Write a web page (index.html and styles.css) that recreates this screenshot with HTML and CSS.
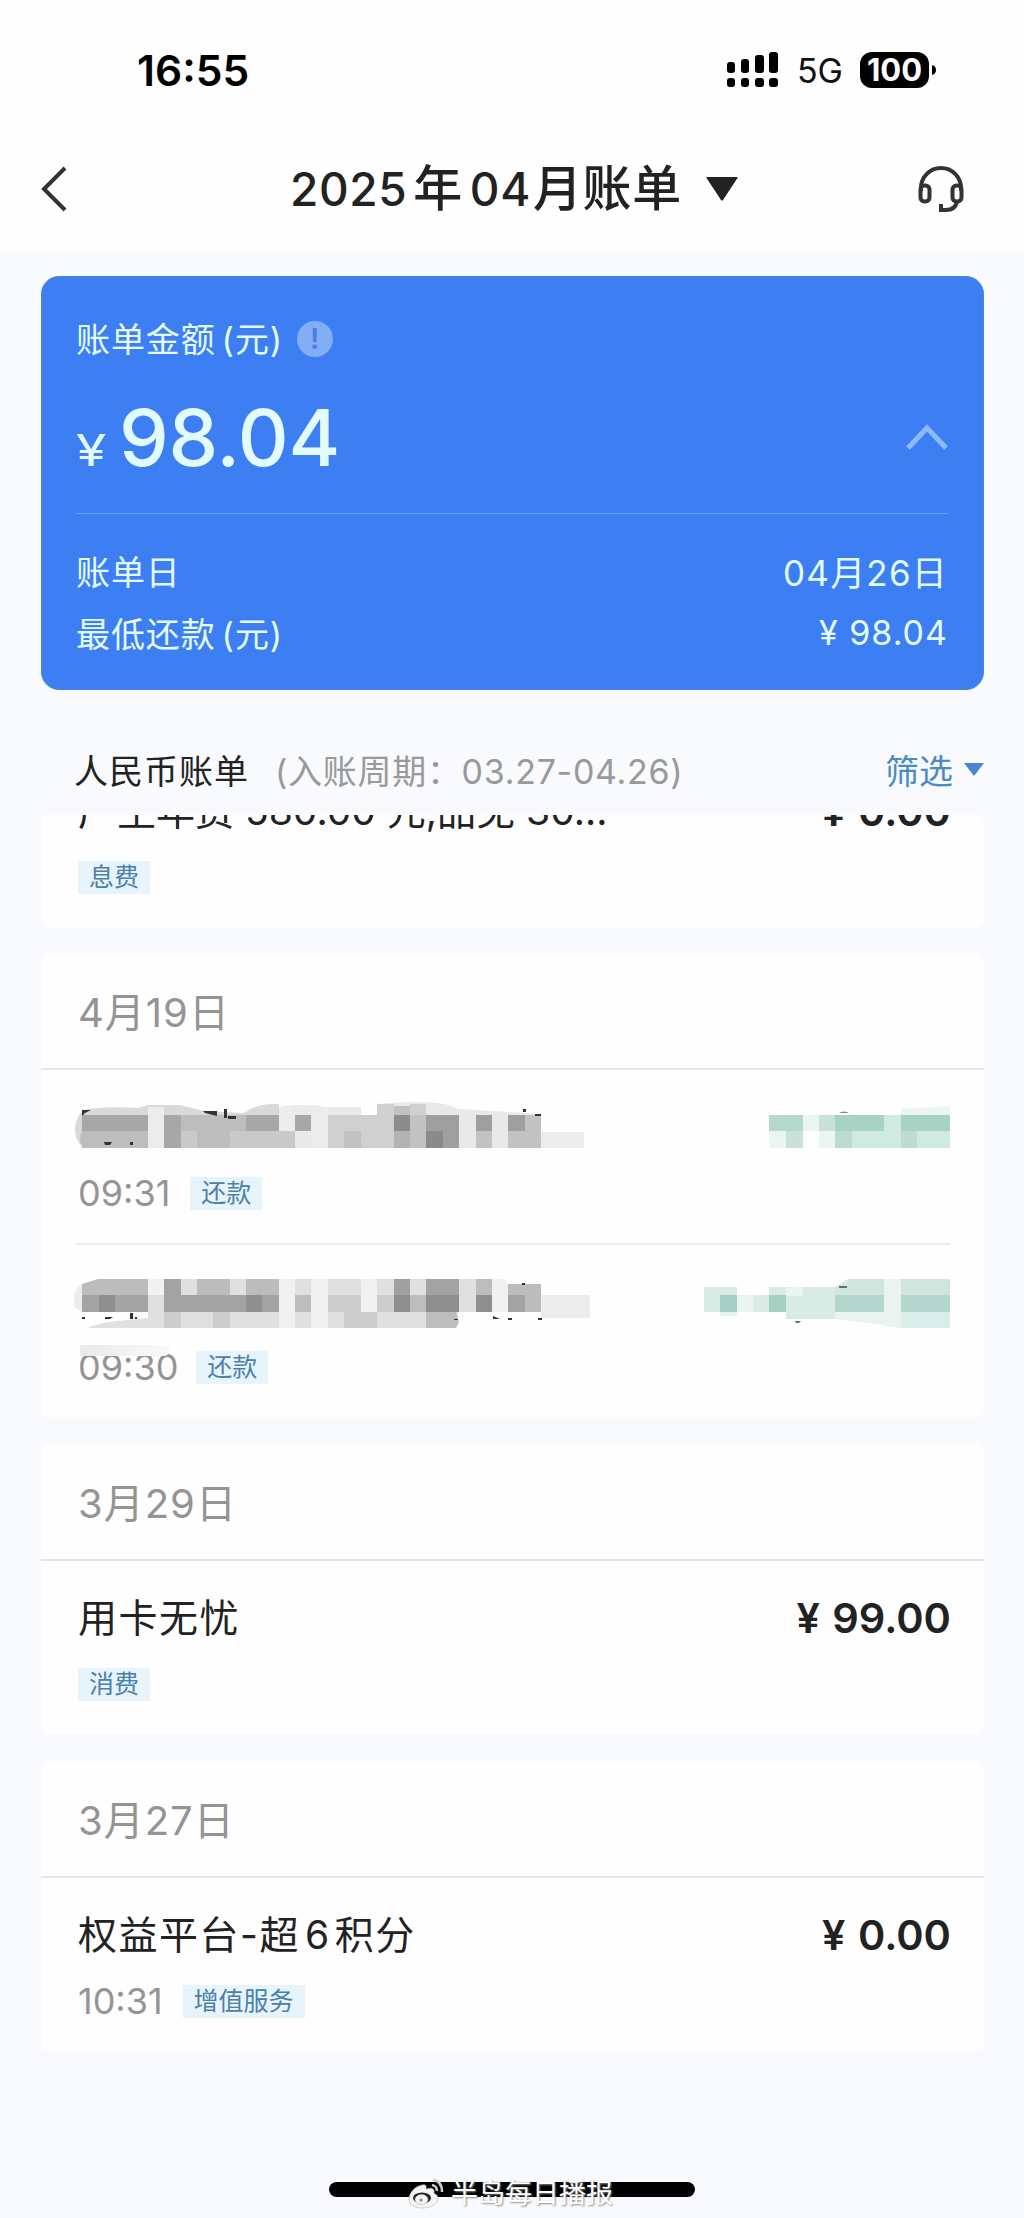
FILE: index.html
```html
<!DOCTYPE html>
<html lang="zh-CN">
<head>
  <meta charset="UTF-8" />
  <meta name="viewport" content="width=device-width, initial-scale=1.0" />
  <title>账单</title>
  <link rel="stylesheet" href="styles.css">
</head>
<body>
  <div class="top">
    <div class="status-bar">
      <span class="clock">16:55</span>
      <div class="status-icons">
        <svg class="signal" width="52" height="36" viewBox="0 0 52 36">
          <rect x="0" y="10" width="8" height="11" rx="3"/>
          <rect x="14" y="7" width="8" height="14" rx="3"/>
          <rect x="28" y="3" width="9" height="18" rx="3"/>
          <rect x="42" y="0" width="9" height="21" rx="3"/>
          <rect x="0" y="26" width="8" height="9" rx="3"/>
          <rect x="14" y="26" width="8" height="9" rx="3"/>
          <rect x="28" y="26" width="9" height="9" rx="3"/>
          <rect x="42" y="26" width="9" height="9" rx="3"/>
        </svg>
        <span class="network">5G</span>
        <span class="battery">100</span>
        <svg class="battery-tip" width="4" height="10" viewBox="0 0 4 10"><path d="M0 0Q4 1 4 5Q4 9 0 10Z"/></svg>
      </div>
    </div>
    <div class="nav-bar">
      <svg class="back" width="28" height="46" viewBox="0 0 28 46"><path d="M25 2L4 23L25 44"/></svg>
      <div class="title">
        <span>2025</span><span class="year">年</span><span>04</span><span class="month">月账单</span>
        <svg class="title-arrow" width="34" height="26" viewBox="0 0 34 26"><path d="M2 1H32Q33 1 32.500 2L18 24Q17 25.500 16 24L1.500 2Q1 1 2 1Z"/></svg>
      </div>
      <svg class="service" width="46" height="48" viewBox="0 0 46 48">
        <path d="M3 26V23A20 20 0 0 1 43 23V26"/>
        <rect x="2.500" y="20.500" width="9" height="16" rx="4"/>
        <rect x="34.500" y="20.500" width="9" height="16" rx="4"/>
        <path d="M39 37Q37 45 28 45H23V39"/>
      </svg>
    </div>
  </div>

  <div class="content">
    <div class="summary">
      <div class="summary-label">
        <span>账单金额<span class="unit">(元)</span></span>
        <span class="info">!</span>
      </div>
      <div class="summary-amount">
        <span class="yen">¥</span><span class="amount">98.04</span>
        <svg class="collapse" width="42" height="28" viewBox="0 0 42 28"><path d="M2 24L21 4L40 24"/></svg>
      </div>
      <div class="summary-rows">
        <div class="summary-row"><span>账单日</span><span class="bill-day">04月26日</span></div>
        <div class="summary-row"><span>最低还款<span class="unit">(元)</span></span><span class="min-pay">¥ 98.04</span></div>
      </div>
    </div>

    <div class="list-head">
      <span class="currency">人民币账单</span>
      <span class="period">(入账周期：<span class="range">03.27-04.26)</span></span>
      <span class="filter">筛选</span>
      <svg class="filter-arrow" width="20" height="13" viewBox="0 0 20 13"><path d="M0 0H20L10 13Z"/></svg>
    </div>

    <div class="list">
      <!-- scrolled under the list header -->
      <div class="card first">
        <div class="item">
          <div class="line"><span class="name fee">产生年费 580.00 元,品免 30...</span><span class="price">¥ 0.00</span></div>
          <div class="meta"><span class="tag">息费</span></div>
        </div>
      </div>

      <div class="card">
        <div class="date">4月19日</div>
        <div class="item">
          <div class="line masked">
            <svg class="mosaic" width="520" height="56" viewBox="74 1100 520 56">
              <path fill="#d9d9d9" d="M84 1110Q102 1106 138 1108L148 1105H180L204 1111L244 1113Q256 1103 279 1104V1148H112Q96 1142 90 1147Q76 1148 75 1130Q75 1117 84 1110Z"/>
              <path fill="#e9e9e9" d="M279 1107Q300 1103 328 1107H361V1115H377V1104Q420 1100 445 1104L459 1109L541 1114V1148H279Z"/>
              <path fill="#ededed" d="M541 1132H584V1148H541Z"/>
              <path fill="#bdbdbd" d="M82 1115H279V1131H82Z"/>
              <path fill="#a7a7a7" d="M82 1115H148V1131H82ZM164 1115H181V1148H164ZM246 1115H279V1131H246ZM295 1115H311V1131H295Z"/>
              <path fill="#bdbdbd" d="M82 1131H148V1148H82V1146Q78 1140 82 1131ZM197 1131H230V1148H197ZM213 1115H246V1131H213Z"/>
              <path fill="#c9c9c9" d="M181 1131H197V1148H181ZM230 1131H295V1148H230Z"/>
              <path fill="#ececec" d="M148 1107H164V1148H148ZM279 1107H295V1131H279ZM311 1107H328V1148H311Z"/>
              <path fill="#d0d0d0" d="M328 1115H394V1148H328ZM377 1104H394V1148H377ZM410 1104H426V1115H410Z"/>
              <path fill="#c2c2c2" d="M344 1131H361V1148H344ZM410 1115H426V1148H410ZM394 1106H410V1115H394ZM508 1131H541V1148H508ZM525 1115H541V1131H525ZM476 1131H492V1148H476Z"/>
              <path fill="#8c8c8c" d="M394 1115H410V1131H394Z"/>
              <path fill="#b3b3b3" d="M394 1131H410V1148H394Z"/>
              <path fill="#9f9f9f" d="M426 1115H459V1148H426ZM476 1115H492V1131H476ZM508 1115H525V1131H508Z"/>
              <path fill="#8a8a8a" d="M426 1131H443V1148H426Z"/>
              <path fill="#333" d="M82 1110H91L85 1113L82 1116ZM203 1111H217V1116L205 1113ZM224 1109H227V1118H224ZM228 1116H236V1119H228ZM104 1142H112L110 1145H105ZM130 1142H133V1145H130ZM523 1109H526V1112H523ZM535 1114H541V1116H535Z"/>
            </svg>
            <svg class="mosaic" width="184" height="56" viewBox="768 1100 184 56">
              <path fill="#ebf5f2" d="M770 1131H804V1148H770ZM902 1109L951 1106V1115H902ZM804 1115H820V1131H804ZM820 1131H836V1148H820Z"/>
              <path fill="#b5d9cd" d="M770 1115H804V1131H770Z"/>
              <path fill="#c8e2da" d="M820 1115H836V1131H820ZM787 1131H804V1148H787Z"/>
              <path fill="#d0eae2" d="M853 1131H902V1148H853ZM885 1115H902V1148H885ZM918 1131H951V1148H918Z"/>
              <path fill="#a6d3c4" d="M836 1115H885V1131H836ZM902 1115H951V1131H902Z"/>
              <path fill="#bcdcd2" d="M836 1131H853V1148H836ZM902 1131H918V1148H902Z"/>
              <path fill="#738a82" d="M840 1113Q845 1110 850 1113Z"/>
            </svg>
          </div>
          <div class="meta"><span class="time">09:31</span><span class="tag">还款</span></div>
        </div>
        <div class="item split">
          <div class="line masked second">
            <svg class="mosaic" width="520" height="56" viewBox="74 1276 520 56">
              <path fill="#ececec" d="M82 1284Q72 1290 73 1306L82 1312ZM541 1295H590V1318H541Z"/>
              <path fill="#e0e0e0" d="M148 1279H504L508 1284V1312H458L456 1328H88Q96 1322 148 1318Z"/>
              <path fill="#bcbcbc" d="M82 1284L98 1279H148V1295H82ZM197 1279H230V1295H197ZM246 1279H279V1295H246ZM508 1284H541V1312H508Z"/>
              <path fill="#a3a3a3" d="M82 1295H148V1312H82ZM164 1295H279V1312H164ZM164 1279H181V1295H164ZM426 1279H459V1295H426ZM476 1295H492V1312H476ZM508 1295H525V1312H508Z"/>
              <path fill="#8f8f8f" d="M99 1295H115V1312H99ZM246 1295H262V1312H246ZM394 1295H410V1312H394ZM426 1295H459V1312H426ZM476 1295H492V1312H476Z"/>
              <path fill="#a0a0a0" d="M394 1279H410V1295H394Z"/>
              <path fill="#bdbdbd" d="M295 1295H311V1312H295ZM426 1312H456L459 1322L456 1328H426ZM476 1279H492V1295H476ZM410 1295H426V1312H410Z"/>
              <path fill="#cdcdcd" d="M164 1312H181V1328H164ZM213 1312H230V1328H213ZM328 1295H361V1312H328ZM344 1312H377V1328H344ZM377 1295H394V1312H377Z"/>
              <path fill="#f1f1f1" d="M279 1279H295V1328H279ZM311 1279H328V1328H311ZM361 1279H377V1312H361ZM492 1279H504L508 1284V1312H492ZM148 1279H164V1295H148Z"/>
              <path fill="#333" d="M82 1317H85V1319H82ZM105 1317H113L110 1319H105ZM130 1313H133V1319H130ZM135 1317H137V1319H135ZM454 1319H458V1320H454ZM493 1316L500 1319H493ZM508 1318H512V1320H508ZM538 1318H542V1320H538ZM522 1283H525V1285H522Z"/>
            </svg>
            <svg class="mosaic" width="248" height="56" viewBox="704 1276 248 56">
              <path fill="#d9ebe5" d="M705 1287H738V1312H705ZM754 1295H770V1312H754ZM770 1287H787V1312H770ZM787 1296L804 1287H836L849 1279H885V1320L836 1319H787Z"/>
              <path fill="#e9f4f1" d="M738 1295H754V1312H738ZM787 1287H804V1296H787ZM885 1279H902V1328L885 1326ZM721 1312H738V1316H721ZM836 1312H885V1325L836 1319Z"/>
              <path fill="#cfe5dd" d="M849 1279H885V1295H849ZM902 1279H951V1295H902ZM836 1287H853V1295H836Z"/>
              <path fill="#a4cfc2" d="M721 1295H738V1312H721ZM770 1295H787V1312H770Z"/>
              <path fill="#b2d8cd" d="M836 1295H885V1312H836ZM902 1295H951V1312H902Z"/>
              <path fill="#dceee9" d="M902 1312H951V1328H902Z"/>
              <path fill="#5d756c" d="M796 1321H802L800 1323H797ZM840 1286H848V1288H840Z"/>
            </svg>
          </div>
          <div class="meta"><span class="time smear">09:30</span><span class="tag">还款</span></div>
        </div>
      </div>

      <div class="card">
        <div class="date">3月29日</div>
        <div class="item">
          <div class="line"><span class="name">用卡无忧</span><span class="price">¥ 99.00</span></div>
          <div class="meta"><span class="tag">消费</span></div>
        </div>
      </div>

      <div class="card">
        <div class="date">3月27日</div>
        <div class="item">
          <div class="line"><span class="name">权益平台-超<span class="six">6</span>积分</span><span class="price">¥ 0.00</span></div>
          <div class="meta"><span class="time">10:31</span><span class="tag">增值服务</span></div>
        </div>
      </div>
    </div>
  </div>

  <div class="home-bar">
    <div class="watermark">
      <svg width="36" height="32" viewBox="0 0 36 32">
        <path class="wb-body" d="M14 7C7 8 1 15 1 21C1 27 7 30 14 30C23 30 30 26 30 20C30 17 27 16 26 15C27 11 24 9 18 11C19 7 17 6 14 7Z"/>
        <ellipse class="wb-eye" cx="14" cy="20" rx="9" ry="5.500"/>
        <ellipse class="wb-body" cx="13.500" cy="21.500" rx="6.500" ry="5"/>
        <circle class="wb-pupil" cx="13" cy="22" r="1.500"/>
        <path class="wb-wave" d="M25 2Q34 3 34 14M24 7Q29 8 29 13"/>
      </svg>
      <span>半岛每日播报</span>
    </div>
  </div>
</body>
</html>
```

FILE: styles.css
```css
* {
  box-sizing: border-box;
}
body {
  margin: 0;
  height: 2218px;
  background: #f8fafe;
  color: #222;
  font-family: Inter, "Noto Sans CJK SC", sans-serif;
  display: flex;
  flex-direction: column;
  overflow: hidden;
  white-space: nowrap;
}
svg {
  display: block;
  flex: none;
}
.top {
  height: 256px;
  background: linear-gradient(#fefefe 244px, #f8fafe 256px);
}
.status-bar {
  height: 140px;
  padding: 0 88px 0 137px;
  display: flex;
  align-items: center;
  justify-content: space-between;
}
.clock {
  font-size: 42.5px;
  font-weight: 600;
  color: #000;
}
.status-icons {
  display: flex;
  align-items: center;
}
.network {
  font-size: 34px;
  margin-left: 18px;
  color: #111;
}
.battery {
  width: 69px;
  height: 36px;
  margin: 0 3px 0 17px;
  border-radius: 12px;
  background: #000;
  color: #fff;
  font-size: 31px;
  font-weight: 700;
  line-height: 36px;
  text-align: center;
}
.nav-bar {
  height: 98px;
  padding: 0 60px 0 40px;
  display: flex;
  align-items: center;
}
.back path {
  fill: none;
  stroke: #333;
  stroke-width: 4;
}
.title {
  display: flex;
  align-items: baseline;
  margin-left: 222px;
  font-size: 46px;
  font-weight: 500;
  line-height: 52px;
  letter-spacing: 0.6px;
}
.title .year {
  margin: 0 7px 0 6px;
  font-size: 49px;
}
.title .month {
  margin-left: 2px;
  font-size: 49px;
}
.title-arrow {
  margin-left: 23px;
  align-self: center;
  fill: #222;
}
.service {
  margin-left: auto;
  fill: none;
  stroke: #333;
  stroke-width: 4;
}
.content {
  height: 1926px;
  padding: 20px 40px 0 41px;
}
.summary {
  height: 414px;
  padding: 0 35px 0 34px;
  border-radius: 18px;
  background: #3d7ff2;
  border: 1px solid #4a83d8;
  color: #e2fbff;
  font-size: 34px;
}
.summary-label {
  height: 124px;
  display: flex;
  align-items: center;
  letter-spacing: 0.9px;
}
.summary-label > span:first-child {
  padding-bottom: 4px;
}
.unit {
  margin-left: 6px;
}
.info {
  width: 36px;
  height: 36px;
  margin-left: 14px;
  border-radius: 50%;
  background: #82adf7;
  color: #4b7fdf;
  font-size: 29px;
  font-weight: 600;
  line-height: 36px;
  text-align: center;
}
.summary-amount {
  height: 113px;
  display: flex;
  align-items: baseline;
  border-bottom: 1px solid #669bee;
}
.yen {
  width: 43px;
  font-size: 44px;
  transform: scaleX(1.25);
  transform-origin: left;
}
.amount {
  font-size: 79px;
  font-weight: 500;
  line-height: 72px;
  letter-spacing: -0.3px;
}
.collapse {
  margin-left: auto;
  align-self: flex-start;
  margin-top: 23px;
  fill: none;
  stroke: #8bbafb;
  stroke-width: 5;
}
.summary-rows {
  padding-top: 25px;
}
.summary-row {
  height: 62px;
  display: flex;
  align-items: center;
  justify-content: space-between;
  letter-spacing: 0.9px;
}
.bill-day {
  font-size: 35px;
  letter-spacing: 1.2px;
}
.min-pay {
  letter-spacing: 1px;
}
.list-head {
  height: 125px;
  padding: 34px 0 0 33px;
  display: flex;
  align-items: center;
  font-size: 34px;
}
.currency {
  letter-spacing: 1px;
}
.period {
  margin-left: 26px;
  color: #999;
  letter-spacing: 0.7px;
}
.filter {
  margin-left: auto;
  color: #4b8bc4;
}
.filter-arrow {
  margin-left: 11px;
  fill: #4a86cc;
}
.list {
  overflow: hidden;
}
.card {
  margin-bottom: 27px;
  border-radius: 8px;
  background: #fefefe;
}
.card.first {
  height: 113px;
  margin-bottom: 25px;
  padding-bottom: 1px;
  display: flex;
  flex-direction: column;
  justify-content: flex-end;
}
.date {
  height: 117px;
  padding: 4px 0 0 37px;
  border-bottom: 2px solid #e2e4e8;
  color: #949494;
  font-size: 40px;
  line-height: 112px;
  letter-spacing: 1px;
}
.item {
  height: 173px;
  padding: 30px 33px 0 37px;
  flex: none;
}
.split {
  height: 174px;
  padding-top: 33px;
  position: relative;
}
.split::before {
  content: "";
  position: absolute;
  top: 0;
  left: 35px;
  right: 33px;
  height: 2px;
  background: #ececec;
}
.line {
  height: 56px;
  display: flex;
  align-items: center;
  justify-content: space-between;
}
.name {
  padding-bottom: 8px;
  font-size: 39px;
  letter-spacing: 1.5px;
}
.fee {
  letter-spacing: 0;
}
.six {
  margin: 0 4px 0 5px;
}
.price {
  padding-bottom: 2px;
  font-size: 41.5px;
  font-weight: 600;
  word-spacing: 2px;
}
.masked {
  margin-left: -4px;
}
.meta {
  height: 74px;
  display: flex;
  align-items: center;
}
.split .meta {
  height: 70px;
}
.time {
  margin-right: 20px;
  color: #949494;
  font-size: 36px;
}
.smear {
  margin-right: 18px;
  position: relative;
}
.smear::before {
  content: "";
  position: absolute;
  left: 2px;
  top: 0;
  width: 90px;
  height: 11px;
  border-radius: 0 40px 50px 0;
  background: linear-gradient(90deg, #e9e9e9, #fafafa);
}
.tag {
  height: 33px;
  padding: 0 11px;
  background: #e8f4fb;
  color: #4a80ab;
  font-size: 25px;
  line-height: 32px;
}
.home-bar {
  width: 366px;
  height: 15px;
  margin: 0 auto;
  border-radius: 8px;
  background: #000;
  position: relative;
}
.watermark {
  position: absolute;
  left: 79px;
  top: -5px;
  display: flex;
  align-items: center;
  gap: 7px;
  color: #fff;
  font-size: 27px;
  line-height: 34px;
  text-shadow: 1px 1px 2px #888;
}
.wb-body {
  fill: #f4f4f4;
  stroke: #aaa;
  stroke-width: 0.5;
}
.wb-eye {
  fill: #222;
}
.wb-pupil {
  fill: #888;
}
.wb-wave {
  fill: none;
  stroke: #ccc;
  stroke-width: 2.5;
}
```
